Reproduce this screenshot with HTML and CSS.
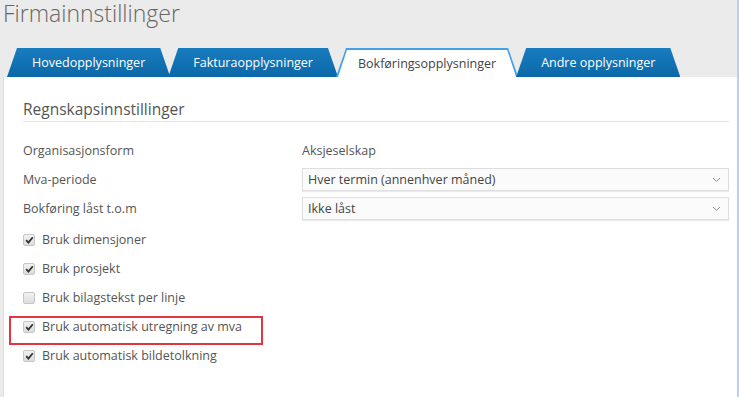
FILE: index.html
```html
<!DOCTYPE html>
<html lang="no">
<head>
  <meta charset="UTF-8">
  <meta name="viewport" content="width=device-width, initial-scale=1.0">
  <title>Firmainnstillinger</title>
  <link rel="stylesheet" href="styles.css">
</head>
<body>
  <!-- Header -->
  <h1 class="page-title">Firmainnstillinger</h1>
  <ul class="tabs">
    <li class="tab"><a href="#">Hovedopplysninger</a></li>
    <li class="tab"><a href="#">Fakturaopplysninger</a></li>
    <li class="tab active"><a href="#">Bokføringsopplysninger</a></li>
    <li class="tab"><a href="#">Andre opplysninger</a></li>
  </ul>
  <!-- Main Content -->
  <div class="panel">
    <h2 class="section-title">Regnskapsinnstillinger</h2>
    <div class="form-rows">
      <div class="form-row">
        <span class="form-label">Organisasjonsform</span>
        <span class="form-value">Aksjeselskap</span>
      </div>
      <div class="form-row">
        <span class="form-label">Mva-periode</span>
        <div class="select">
          <span>Hver termin (annenhver måned)</span>
          <svg width="9" height="6" viewBox="0 0 9 6"><polyline points="1,1 4.5,4.5 8,1" fill="none" stroke="#8a8a8a" stroke-width="1"/></svg>
        </div>
      </div>
      <div class="form-row">
        <span class="form-label">Bokføring låst t.o.m</span>
        <div class="select">
          <span>Ikke låst</span>
          <svg width="9" height="6" viewBox="0 0 9 6"><polyline points="1,1 4.5,4.5 8,1" fill="none" stroke="#8a8a8a" stroke-width="1"/></svg>
        </div>
      </div>
    </div>
    <div class="checks">
      <label class="check-row">
        <span class="checkbox"><svg width="9" height="8" viewBox="0 0 9 8"><path d="M1.2 4.2 L3.4 6.6 L7.8 1.2" fill="none" stroke="#333" stroke-width="1.8"/></svg></span>
        Bruk dimensjoner
      </label>
      <label class="check-row">
        <span class="checkbox"><svg width="9" height="8" viewBox="0 0 9 8"><path d="M1.2 4.2 L3.4 6.6 L7.8 1.2" fill="none" stroke="#333" stroke-width="1.8"/></svg></span>
        Bruk prosjekt
      </label>
      <label class="check-row">
        <span class="checkbox"></span>
        Bruk bilagstekst per linje
      </label>
      <label class="check-row highlighted">
        <span class="checkbox"><svg width="9" height="8" viewBox="0 0 9 8"><path d="M1.2 4.2 L3.4 6.6 L7.8 1.2" fill="none" stroke="#333" stroke-width="1.8"/></svg></span>
        Bruk automatisk utregning av mva
      </label>
      <label class="check-row">
        <span class="checkbox"><svg width="9" height="8" viewBox="0 0 9 8"><path d="M1.2 4.2 L3.4 6.6 L7.8 1.2" fill="none" stroke="#333" stroke-width="1.8"/></svg></span>
        Bruk automatisk bildetolkning
      </label>
    </div>
  </div>
</body>
</html>
```

FILE: styles.css
```css
* {
  box-sizing: border-box;
}
body {
  font-family: 'Open Sans', sans-serif;
  margin: 0;
  background-color: #ebebeb;
  border-right: 2px solid #b6d0f5;
  height: 100vh;
  display: flex;
  flex-direction: column;
  overflow: hidden;
}
.page-title {
  margin: 0;
  padding: 1px 0 0 3px;
  font-size: 23px;
  font-weight: 300;
  line-height: 24px;
  color: #666666;
}
.tabs {
  list-style: none;
  margin: 23px 0 0;
  padding: 0 0 0 7px;
  display: flex;
}
.tab {
  margin-right: -2px;
  background: linear-gradient(#187cbf, #0b68a8);
  clip-path: polygon(10px 0, calc(100% - 10px) 0, 100% 100%, 0 100%);
}
.tab a {
  display: block;
  padding: 0 25px;
  line-height: 29px;
  font-size: 12.5px;
  color: #ffffff;
  text-decoration: none;
}
.tab.active {
  background: #45a0e4;
  padding: 2px 2px 0;
}
.tab.active a {
  background-color: #ffffff;
  color: #444444;
  line-height: 27px;
  padding: 0 20px;
  clip-path: polygon(9px 0, calc(100% - 9px) 0, 100% 100%, 0 100%);
}
.panel {
  flex: 1;
  margin-left: 3px;
  background-color: #ffffff;
  border-left: 1px solid #dcdcdc;
  padding: 20px 8px 0 19px;
}
.section-title {
  margin: 0;
  font-size: 15.5px;
  font-weight: 400;
  line-height: 24px;
  color: #555555;
  border-bottom: 1px solid #e3e3e3;
}
.form-rows {
  margin-top: 14px;
}
.form-row {
  display: flex;
  align-items: center;
  height: 29px;
  font-size: 12.5px;
  color: #555555;
}
.form-label {
  width: 279px;
  flex-shrink: 0;
}
.select {
  flex: 1;
  height: 23px;
  display: flex;
  align-items: center;
  justify-content: space-between;
  padding: 0 7px 0 5px;
  border: 1px solid #dedede;
  background-color: #fbfbfb;
  box-shadow: 0 1px 1px rgba(0, 0, 0, 0.08);
  color: #444444;
}
.checks {
  margin-top: 2px;
}
.check-row {
  display: flex;
  align-items: center;
  gap: 7px;
  height: 29px;
  font-size: 12.5px;
  color: #555555;
  position: relative;
}
.checkbox {
  width: 12px;
  height: 12px;
  flex-shrink: 0;
  display: flex;
  align-items: center;
  justify-content: center;
  border: 1px solid #c6c6c6;
  border-radius: 2px;
  background: linear-gradient(#f2f2f2, #dcdcdc);
}
.check-row.highlighted::after {
  content: "";
  position: absolute;
  left: -14px;
  top: 4px;
  width: 250px;
  height: 25px;
  border: 2px solid #e3343f;
}
```
